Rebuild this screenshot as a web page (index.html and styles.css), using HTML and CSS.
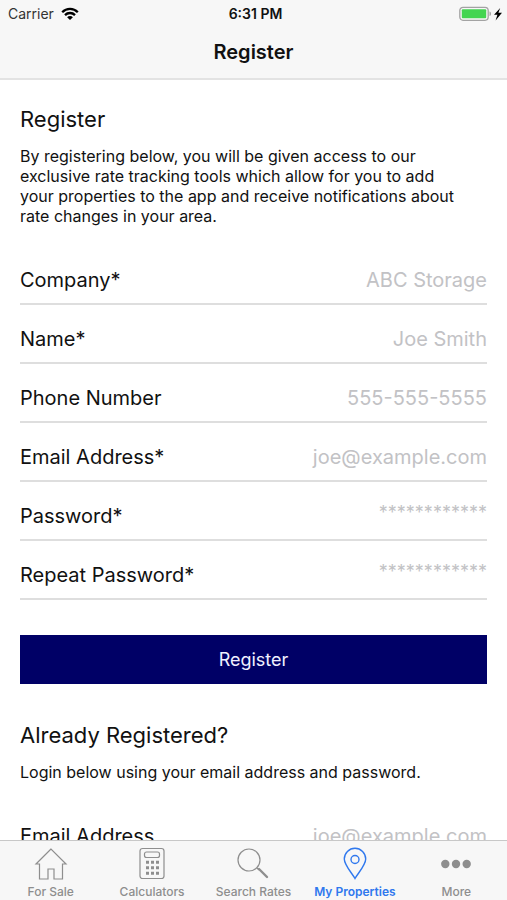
FILE: index.html
```html
<!DOCTYPE html>
<html lang="en">
<head>
<meta charset="utf-8">
<meta name="viewport" content="width=device-width, initial-scale=1">
<title>Register</title>
<link rel="stylesheet" href="styles.css">
</head>
<body>
<header class="top">
  <div class="status">
    <div class="carrier">Carrier
      <svg width="18" height="14" viewBox="0 0 18 14" fill="none" stroke="#000" stroke-width="2.3"><path d="M1.2 5.2C5.6.8 12.4.8 16.8 5.2M4 8.1c2.8-2.8 7.2-2.8 10 0"/><path d="M9 13 6.1 10.2c1.6-1.5 4.2-1.5 5.8 0z" fill="#000" stroke="none"/></svg>
    </div>
    <div class="time">6:31 PM</div>
    <div class="power">
      <svg width="44" height="16" viewBox="0 0 44 16"><rect x=".8" y="1.3" width="28.4" height="13" rx="3.2" fill="none" stroke="#a3a3a3" stroke-width="1.3"/><rect x="2.8" y="3.3" width="24.4" height="9" rx="1" fill="#43d551"/><path d="M30.5 5.500c2 .5 2 4 0 4.600z" fill="#a3a3a3"/><path d="M41.200 2 35 8.800h3.400l-1.800 5.700 6.400-7.700h-3.600z" fill="#000"/></svg>
    </div>
  </div>
  <h1 class="title">Register</h1>
</header>

<main class="content">
  <form class="form">
    <h2 class="heading">Register</h2>
    <p class="intro">By registering below, you will be given access to our exclusive rate tracking tools which allow for you to add your properties to the app and receive notifications about rate changes in your area.</p>
    <div class="fields">
      <div class="field"><label for="company">Company*</label><input id="company" type="text" placeholder="ABC Storage"></div>
      <div class="field"><label for="name">Name*</label><input id="name" type="text" placeholder="Joe Smith"></div>
      <div class="field"><label for="phone">Phone Number</label><input id="phone" type="tel" placeholder="555-555-5555"></div>
      <div class="field"><label for="email">Email Address*</label><input id="email" type="email" placeholder="joe@example.com"></div>
      <div class="field"><label for="password">Password*</label><input id="password" type="password" placeholder="************"></div>
      <div class="field"><label for="repeat">Repeat Password*</label><input id="repeat" type="password" placeholder="************"></div>
    </div>
    <button class="submit" type="submit">Register</button>
  </form>
  <form class="form">
    <h2 class="heading">Already Registered?</h2>
    <p class="intro">Login below using your email address and password.</p>
    <div class="fields">
      <div class="field"><label for="login-email">Email Address</label><input id="login-email" type="email" placeholder="joe@example.com"></div>
    </div>
  </form>
</main>

<nav class="tabs">
  <a class="tab" href="#sale">
    <svg width="34" height="34" viewBox="0 0 34 34" fill="none" stroke="currentColor" stroke-width="1.200"><path d="M17 2 2 17h3.500v15H14V22h6v10h8.500V17H32z"/></svg>
    <span>For Sale</span></a>
  <a class="tab" href="#calculators">
    <svg width="34" height="34" viewBox="0 0 34 34" fill="none" stroke="currentColor" stroke-width="1.200"><rect x="5" y="1.500" width="24" height="30" rx="2.500"/><rect x="9.500" y="5" width="15" height="5.500" rx="2"/><path d="M11 15.200h3m2 0h3m2 0h3M11 20.700h3m2 0h3m2 0h3M11 26.200h3m2 0h3m2 0h3" stroke-width="3"/></svg>
    <span>Calculators</span></a>
  <a class="tab" href="#rates">
    <svg width="34" height="34" viewBox="0 0 34 34" fill="none" stroke="currentColor" stroke-width="1.200"><circle cx="13" cy="13" r="11"/><path d="m21 21 2 2"/><path d="m23 22 8 8" stroke-width="2.400" stroke-linecap="round"/></svg>
    <span>Search Rates</span></a>
  <a class="tab active" href="#properties" aria-current="page">
    <svg width="34" height="34" viewBox="0 0 34 34" fill="none" stroke="currentColor" stroke-width="1.400"><path d="M17 31.500C13.500 25.500 6.300 18 6.300 12a10.700 10.700 0 0 1 21.400 0c0 6-7.200 13.500-10.700 19.500z"/><circle cx="17" cy="12.500" r="4"/></svg>
    <span>My Properties</span></a>
  <a class="tab" href="#more">
    <svg width="34" height="34" viewBox="0 0 34 34" fill="currentColor"><circle cx="6.300" cy="17" r="4.200"/><circle cx="17" cy="17" r="4.200"/><circle cx="27.700" cy="17" r="4.200"/></svg>
    <span>More</span></a>
</nav>
</body>
</html>
```

FILE: styles.css
```css
* {
  box-sizing: border-box;
}

body {
  margin: 0;
  height: 100vh;
  display: flex;
  flex-direction: column;
  overflow: hidden;
  background: #fff;
  color: #111;
  font-family: Inter, "Liberation Sans", sans-serif;
}

.top {
  flex: none;
  background: #f7f7f7;
  border-bottom: 2px solid #e3e3e3;
}

.status {
  display: grid;
  grid-template-columns: 1fr auto 1fr;
  align-items: center;
  height: 27px;
  padding: 0 4px 0 8px;
  font-size: 14px;
}

.carrier {
  display: flex;
  align-items: center;
  gap: 7px;
  color: #333;
}

.time {
  font-weight: 600;
}

.power {
  display: flex;
  justify-content: flex-end;
}

.title {
  margin: 0;
  padding: 13px 0 14px;
  font-size: 20px;
  line-height: 24px;
  font-weight: 600;
  text-align: center;
}

.content {
  flex: 1;
  min-height: 0;
  padding: 24px 20px 0;
  overflow-y: auto;
  scrollbar-width: none;
}

.form {
  margin-bottom: 36px;
}

.heading {
  margin: 0;
  font-size: 22px;
  line-height: 30px;
  font-weight: 400;
}

.intro {
  margin: 12px 0 20px;
  padding-right: 20px;
  font-size: 16px;
  line-height: 20px;
}

.field {
  display: flex;
  align-items: center;
  height: 59px;
  padding-top: 11px;
  border-bottom: 2px solid #dedede;
}

.field label {
  flex: none;
  font-size: 20px;
}

.field input {
  flex: 1;
  min-width: 0;
  padding: 0;
  border: 0;
  outline: 0;
  background: none;
  color: inherit;
  font-family: inherit;
  font-size: 20px;
  text-align: right;
}

.field input[type="password"] {
  padding-bottom: 8px;
  font-size: 18px;
}

.field input::placeholder {
  color: #c2c2c5;
  opacity: 1;
}

.submit {
  display: block;
  width: 100%;
  height: 49px;
  margin-top: 35px;
  border: 0;
  background: #000066;
  color: #f0f0ff;
  font-family: inherit;
  font-size: 18px;
}

.tabs {
  flex: none;
  display: grid;
  grid-template-columns: repeat(5, 1fr);
  height: 60px;
  background: #f7f7f7;
  border-top: 1px solid #c8c8c8;
}

.tab {
  display: flex;
  flex-direction: column;
  align-items: center;
  gap: 3px;
  padding-top: 6px;
  color: #8e8e8e;
  font-size: 12px;
  line-height: 16px;
  font-weight: 500;
  text-decoration: none;
  white-space: nowrap;
}

.active {
  color: #2f78ee;
  font-weight: 600;
}
```
